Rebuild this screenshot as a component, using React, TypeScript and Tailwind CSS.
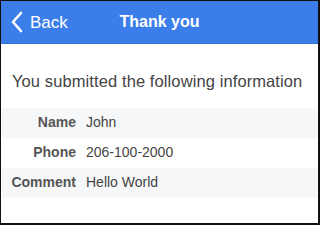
import React from 'react';

const rows = [
  { label: 'Name', value: 'John' },
  { label: 'Phone', value: '206-100-2000' },
  { label: 'Comment', value: 'Hello World' },
];

export default function App() {
  return (
    <div
      className="w-[320px] h-[225px] border-l border-t border-r-2 border-b-2 border-[#111] bg-white overflow-hidden"
      style={{ fontFamily: '"Liberation Sans", Arial, sans-serif' }}
    >
      <div className="relative h-[43px] bg-[#3b7eea] border-b border-[#2f6cd4] flex items-center justify-center">
        <button className="absolute left-[9px] top-0 h-full flex items-center gap-[6px] text-white">
          <svg width="14" height="22" viewBox="0 0 14 22" fill="none">
            <path d="M11 2 L3 11 L11 20" stroke="white" strokeWidth="2.6" strokeLinecap="round" strokeLinejoin="round" />
          </svg>
          <span className="text-[17px] leading-none">Back</span>
        </button>
        <h1 className="text-white font-bold text-[16px] leading-none">Thank you</h1>
      </div>
      <p className="mt-[29px] ml-[11px] text-[16.5px] leading-none text-[#444] tracking-[0.1px]">
        You submitted the following information
      </p>
      <div className="mt-[18px] ml-[1px] mr-[1px]">
        {rows.map((r, i) => (
          <div key={r.label} className={`flex items-center h-[30px] ${i % 2 === 0 ? 'bg-[#f6f7f9]' : 'bg-white'}`}>
            <div className="w-[74px] text-right font-bold text-[14px] text-[#555]">{r.label}</div>
            <div className="ml-[10px] text-[14px] text-[#444]">{r.value}</div>
          </div>
        ))}
      </div>
    </div>
  );
}
